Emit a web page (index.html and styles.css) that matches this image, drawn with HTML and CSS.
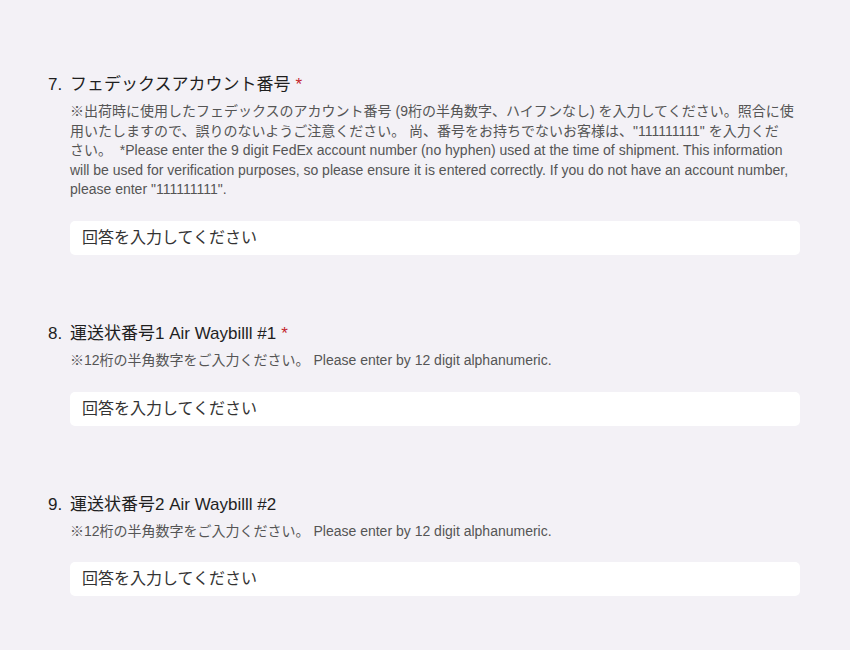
FILE: index.html
```html
<!DOCTYPE html>
<html lang="ja">
<head>
    <meta charset="UTF-8">
    <meta name="viewport" content="width=device-width, initial-scale=1.0">
    <title>フォーム</title>
    <link rel="stylesheet" href="styles.css">
</head>
<body>
    <div id="form-body">
        <div class="question">
            <div class="question-title">
                <span class="question-no">7.</span>
                <span class="question-text">フェデックスアカウント番号<span class="required">*</span></span>
            </div>
            <div class="question-desc">※出荷時に使用したフェデックスのアカウント番号 (9桁の半角数字、ハイフンなし) を入力してください。照合に使<br>用いたしますので、誤りのないようご注意ください。 尚、番号をお持ちでないお客様は、"111111111" を入力くだ<br>さい。 &nbsp;*Please enter the 9 digit FedEx account number (no hyphen) used at the time of shipment. This information<br>will be used for verification purposes, so please ensure it is entered correctly. If you do not have an account number,<br>please enter "111111111".</div>
            <input class="answer" type="text" placeholder="回答を入力してください">
        </div>

        <div class="question">
            <div class="question-title">
                <span class="question-no">8.</span>
                <span class="question-text">運送状番号1 Air Waybilll #1<span class="required">*</span></span>
            </div>
            <div class="question-desc">※12桁の半角数字をご入力ください。 Please enter by 12 digit alphanumeric.</div>
            <input class="answer" type="text" placeholder="回答を入力してください">
        </div>

        <div class="question">
            <div class="question-title">
                <span class="question-no">9.</span>
                <span class="question-text">運送状番号2 Air Waybilll #2</span>
            </div>
            <div class="question-desc">※12桁の半角数字をご入力ください。 Please enter by 12 digit alphanumeric.</div>
            <input class="answer" type="text" placeholder="回答を入力してください">
        </div>
    </div>
</body>
</html>
```

FILE: styles.css
```css
body {
    margin: 0;
    background-color: #f3f1f6;
    font-family: 'Liberation Sans', 'Noto Sans CJK JP', sans-serif;
    color: #1f1f1f;
}
#form-body {
    padding: 73px 50px 0 48px;
}
.question {
    margin-bottom: 67px;
}
.question-title {
    display: flex;
    font-size: 17px;
    line-height: 24px;
}
.question-no {
    width: 22px;
    flex-shrink: 0;
}
.required {
    color: #c4262e;
    margin-left: 5px;
}
.question-desc {
    margin: 5px 0 0 22px;
    font-size: 14px;
    line-height: 19.6px;
    color: #555555;
    white-space: nowrap;
}
.answer {
    display: block;
    box-sizing: border-box;
    width: calc(100% - 22px);
    height: 34px;
    margin: 21px 0 0 22px;
    padding: 0 12px;
    border: none;
    border-radius: 5px;
    background-color: #ffffff;
    font-family: inherit;
    font-size: 16px;
    outline: none;
}
.answer::placeholder {
    color: #333333;
}
```
